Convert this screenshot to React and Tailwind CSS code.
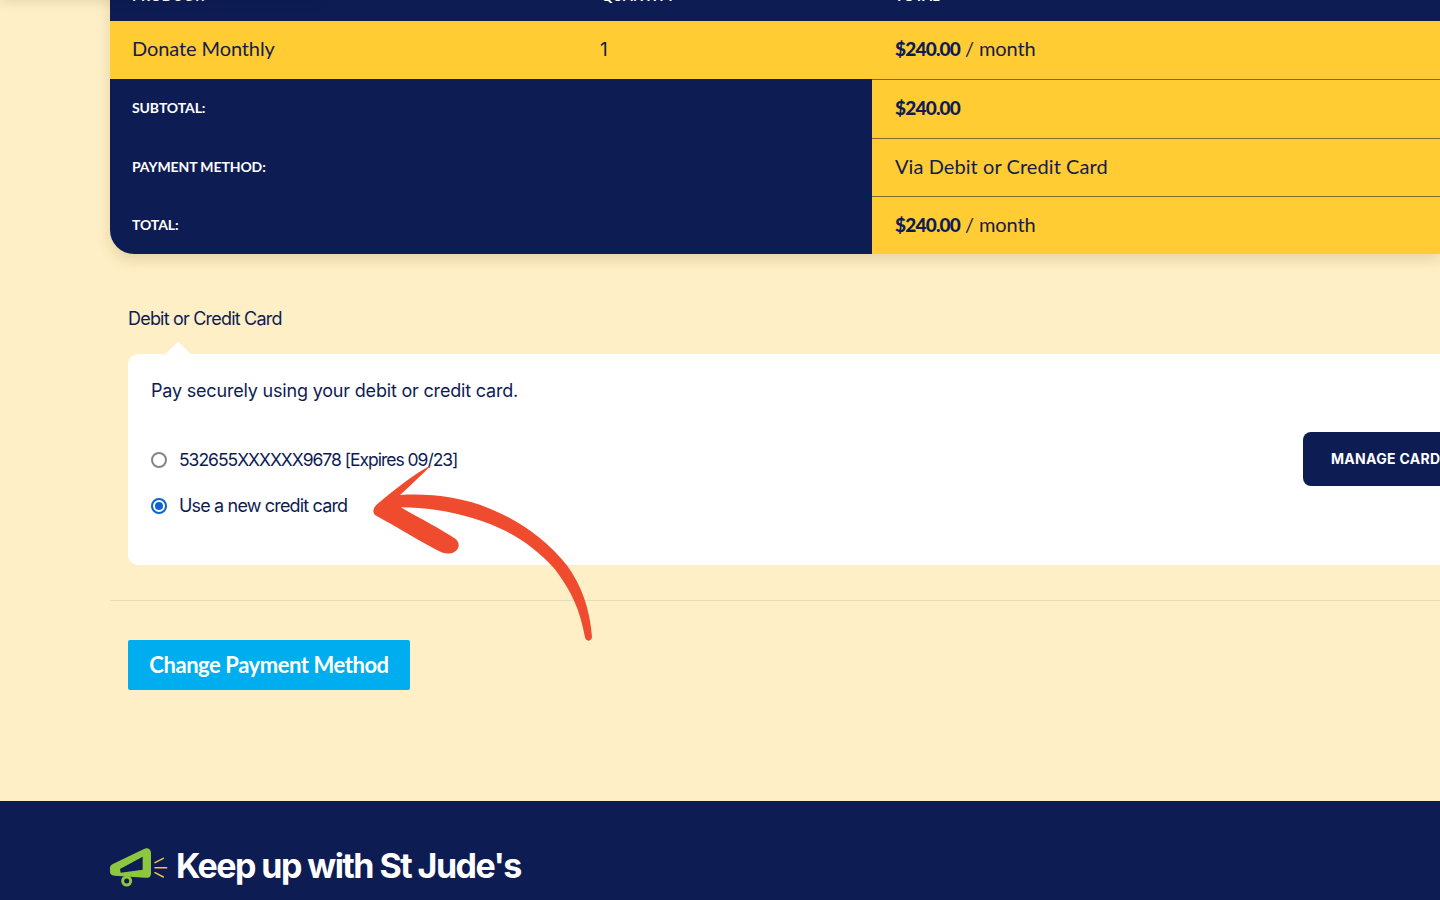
import React from "react";

const LABEL = "col-span-2 flex items-center pb-[1px] pl-[22px] text-[14px] font-bold uppercase tracking-[-0.1px] text-white";
const HEAD = "flex items-end pb-[18px] pl-[22px] text-[14px] font-bold uppercase leading-none tracking-[0.3px] text-white";
const YELLOW = "flex items-center bg-[#ffcc33] pb-[3px] pl-[23px] text-[20px] text-[#151c4a]";
const LINE = "border-t border-[#7d6a28]";

const Price = () => <b className="mt-[2px] text-[19px] font-black tracking-[-0.8px] text-[#0e1c54]">$240.00</b>;

const Megaphone = () => (
    <svg width="80" height="50" viewBox="0 0 240 150" className="-ml-[10px] -mr-[4px] shrink-0">
        <circle cx="80" cy="120" r="12" fill="none" stroke="#8dc63f" strokeWidth="9" />
        <path
            fill="#8dc63f"
            fillRule="evenodd"
            d="M40 68 L132 24 C142 19 153 24 153 36 L153 98 C153 108 144 112 134 110 L44 104 C34 103 30 98 30 92 L30 80 C30 74 34 71 40 68 Z M60 84 L128 47 L128 86 L62 95 Z"
        />
        <path
            d="M165 65 L190 52 M165 80 L200 80 M165 95 L190 108"
            stroke="#f5c242"
            strokeWidth="4.5"
            strokeLinecap="round"
            fill="none"
        />
    </svg>
);

const Arrow = () => (
    <svg
        width="250"
        height="200"
        viewBox="0 0 750 600"
        className="absolute left-[360px] top-[450px]"
    >
        <path
            fill="#ef4b2e"
            d="M216 44 C195 64 150 108 120 135 C210 130 300 140 390 176 C480 212 560 270 620 345 C665 405 690 480 696 560 C695 574 678 577 675 562 C660 480 635 425 585 358 C525 292 465 252 390 222 C310 190 210 172 122 172 C180 205 240 235 288 268 C302 282 298 302 274 310 C258 313 244 308 226 298 C165 265 100 225 45 195 C36 186 40 172 52 162 C105 118 160 72 216 44 Z"
        />
    </svg>
);

const Radio = ({ checked }) =>
    checked ? (
        <span className="flex h-4 w-4 items-center justify-center rounded-full border-2 border-[#0f62d6]">
            <span className="h-2 w-2 rounded-full bg-[#0f62d6]" />
        </span>
    ) : (
        <span className="h-4 w-4 rounded-full border-2 border-[#85858a] bg-white" />
    );

const App = () => {
    return (
        <div className="relative h-[900px] w-[1440px] overflow-hidden bg-[#feefc6] font-['Lato',sans-serif]">
            <div className="absolute left-0 top-[-10px] h-[10px] w-[320px] shadow-[0_0_14px_rgba(0,0,0,0.14)]" />

            <main className="flow-root h-[801px] pl-[110px]">
                {/* order table */}
                <div className="-mt-[38px] grid grid-cols-[469px_293px_1fr] grid-rows-[58.8px_58.4px_58.4px_58.4px_58.4px] overflow-hidden rounded-bl-[24px] bg-[#0e1c54] shadow-[0_6px_14px_rgba(120,90,20,0.18)]">
                    <div className={HEAD}>Product:</div>
                    <div className={HEAD}>Quantity</div>
                    <div className={`${HEAD} pl-[23px]`}>Total</div>

                    <div className="flex items-center bg-[#ffcc33] pb-[3px] pl-[22px] text-[20px] tracking-[-0.1px] text-[#151c4a]">Donate Monthly</div>
                    <div className="flex items-center bg-[#ffcc33] pl-[21px] font-['Inter',sans-serif] text-[19px] text-[#151c4a]">1</div>
                    <div className={YELLOW}>
                        <Price />
                        <span className="ml-[5px] tracking-[-0.1px]">/ month</span>
                    </div>

                    <div className={LABEL}>Subtotal:</div>
                    <div className={`${YELLOW} ${LINE}`}>
                        <Price />
                    </div>

                    <div className={LABEL}>Payment method:</div>
                    <div className={`${YELLOW} ${LINE} tracking-[0.07px]`}>Via Debit or Credit Card</div>

                    <div className={LABEL}>Total:</div>
                    <div className={`${YELLOW} ${LINE}`}>
                        <Price />
                        <span className="ml-[5px] tracking-[-0.1px]">/ month</span>
                    </div>
                </div>

                {/* payment box */}
                <div className="ml-[18px] mt-[53px] font-['Inter',sans-serif] text-[18px] leading-[24px] tracking-[-0.8px] text-[#0e1c54]">Debit or Credit Card</div>

                <div className="relative ml-[18px] mt-[23px] h-[211px] rounded-l-[10px] bg-white pl-[23px] pt-[25px] font-['Inter',sans-serif] text-[#0e1c54]">
                    <span className="absolute left-[41px] top-[-9px] h-[18px] w-[18px] rotate-45 rounded-tl-[3px] bg-white" />
                    <p className="text-[18px] leading-[24px] tracking-[-0.19px]">Pay securely using your debit or credit card.</p>

                    <div className="mt-[45px] flex items-center gap-3 text-[17.5px] leading-[24px] tracking-[-1.02px]">
                        <Radio />
                        <span>532655XXXXXX9678 [Expires 09/23]</span>
                    </div>
                    <div className="mt-[22px] flex items-center gap-3 text-[18px] leading-[24px] tracking-[-0.84px]">
                        <Radio checked />
                        <span>Use a new credit card</span>
                    </div>

                    <button className="absolute left-[1175px] top-[78px] flex h-[54px] w-[160px] items-center rounded-[8px] bg-[#0e1c54] pb-[1px] pl-[28px] text-[14px] font-bold tracking-[0.3px] text-white">
                        MANAGE CARD
                    </button>
                </div>

                <div className="mt-[35px] h-px bg-[#e6dcbd]" />

                <button className="ml-[18px] mt-[39px] flex h-[50px] w-[282px] items-center justify-center rounded-[2px] bg-[#00aeef] pb-[2px] text-[22px] font-bold tracking-[-0.44px] text-white">
                    Change Payment Method
                </button>
            </main>

            <footer className="h-[99px] bg-[#0e1c54] pl-[110px] pt-[40px]">
                <div className="flex items-center">
                    <Megaphone />
                    <h2 className="font-['Inter',sans-serif] text-[34px] font-bold leading-[50px] tracking-[-1.55px] text-white">Keep up with St Jude's</h2>
                </div>
            </footer>

            <Arrow />
        </div>
    );
};

export default App;
